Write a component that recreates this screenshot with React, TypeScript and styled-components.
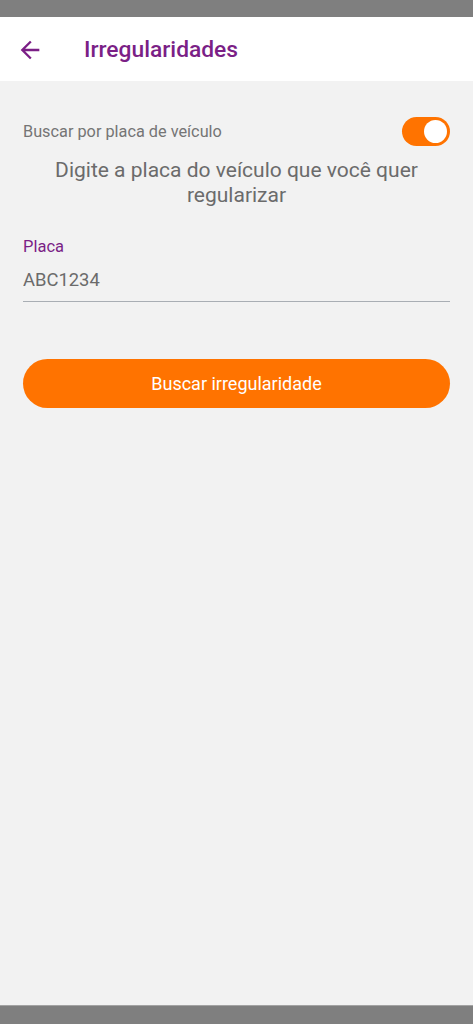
import React, { useState } from "react";
import styled, { createGlobalStyle } from "styled-components";

const GlobalStyle = createGlobalStyle`
  * {
    box-sizing: border-box;
  }
  body {
    margin: 0;
    font-family: Roboto, "Noto Sans", sans-serif;
    background-color: #f2f2f2;
  }
`;

const palette = {
  purple: "#7b1f86",
  orange: "#ff7300",
  gray_text: "#6b6b6b",
  gray_label: "#757575",
  bar: "#7f7f7f",
};

const Screen = styled.div`
  display: flex;
  flex-direction: column;
  height: 1024px;
  background-color: #f2f2f2;
`;

const StatusBar = styled.div`
  height: 17px;
  background-color: ${palette.bar};
  flex-shrink: 0;
`;

const Header = styled.header`
  height: 64px;
  display: flex;
  align-items: center;
  background-color: white;
  padding-left: 16px;
  flex-shrink: 0;

  .header-back-button {
    display: flex;
    align-items: center;
    justify-content: center;
    width: 28px;
    height: 28px;
    margin-top: 2px;
    border: none;
    padding: 0;
    background: none;
    cursor: pointer;
  }
`;

const Title = styled.h1`
  margin: 0 0 0 40px;
  font-size: 22.8px;
  font-weight: 500;
  color: ${palette.purple};
`;

const Content = styled.main`
  flex: 1;
  padding: 36px 23px 0;
`;

const ToggleRow = styled.div`
  display: flex;
  align-items: center;
  justify-content: space-between;
  height: 29px;
`;

const ToggleLabel = styled.span`
  font-size: 16.3px;
  color: ${palette.gray_label};
`;

const Switch = styled.button<{ checked: boolean }>`
  position: relative;
  width: 48px;
  height: 29px;
  border: none;
  border-radius: 15px;
  padding: 0;
  background-color: ${({ checked }) => (checked ? palette.orange : "#b9b9b9")};
  cursor: pointer;

  .switch-thumb {
    position: absolute;
    top: 3px;
    left: ${({ checked }) => (checked ? "22px" : "3px")};
    width: 23px;
    height: 23px;
    border-radius: 50%;
    background-color: white;
    transition: left 0.15s;
  }
`;

const Description = styled.p`
  margin: 12px 0 0;
  text-align: center;
  font-size: 21px;
  line-height: 25px;
  color: ${palette.gray_text};
`;

const Field = styled.div`
  margin-top: 29px;
  display: flex;
  flex-direction: column;
`;

const FieldLabel = styled.label`
  font-size: 16.5px;
  line-height: 20px;
  color: ${palette.purple};
`;

const FieldInput = styled.input`
  margin-top: 8px;
  height: 37px;
  border: none;
  border-bottom: 1px solid #a9aeb4;
  padding: 0 0 8px;
  background: transparent;
  font-family: Roboto, "Noto Sans", sans-serif;
  font-size: 18.4px;
  color: ${palette.gray_text};
  outline: none;
`;

const SubmitButton = styled.button`
  margin-top: 57px;
  width: 100%;
  height: 49px;
  border: none;
  border-radius: 25px;
  background-color: ${palette.orange};
  font-family: Roboto, "Noto Sans", sans-serif;
  font-size: 18px;
  color: white;
  cursor: pointer;
`;

const NavBar = styled.div`
  height: 19px;
  background-color: ${palette.bar};
  border-top: 1px solid #a3a3a3;
  flex-shrink: 0;
`;

const BackIcon: React.FC = () => (
  <svg width="28" height="28" viewBox="0 0 24 24">
    <path
      d="M20 11H7.83l5.59-5.59L12 4l-8 8 8 8 1.41-1.41L7.83 13H20v-2z"
      fill={palette.purple}
    />
  </svg>
);

const App: React.FC = () => {
  const [byPlate, setByPlate] = useState(true);
  const [plate, setPlate] = useState("ABC1234");

  // 토글 변경시
  const toggleByPlate = () => {
    setByPlate(!byPlate);
  };

  const onChangePlate = (e: React.ChangeEvent<HTMLInputElement>) => {
    setPlate(e.target.value);
  };

  return (
    <>
      <GlobalStyle />
      <Screen>
        <StatusBar />
        <Header>
          <button className="header-back-button" type="button">
            <BackIcon />
          </button>
          <Title>Irregularidades</Title>
        </Header>
        <Content>
          <ToggleRow>
            <ToggleLabel>Buscar por placa de veículo</ToggleLabel>
            <Switch
              type="button"
              role="switch"
              aria-checked={byPlate}
              checked={byPlate}
              onClick={toggleByPlate}
            >
              <span className="switch-thumb" />
            </Switch>
          </ToggleRow>
          <Description>
            Digite a placa do veículo que você quer
            <br />
            regularizar
          </Description>
          <Field>
            <FieldLabel htmlFor="placa">Placa</FieldLabel>
            <FieldInput id="placa" value={plate} onChange={onChangePlate} />
          </Field>
          <SubmitButton type="button">Buscar irregularidade</SubmitButton>
        </Content>
        <NavBar />
      </Screen>
    </>
  );
};

export default App;
